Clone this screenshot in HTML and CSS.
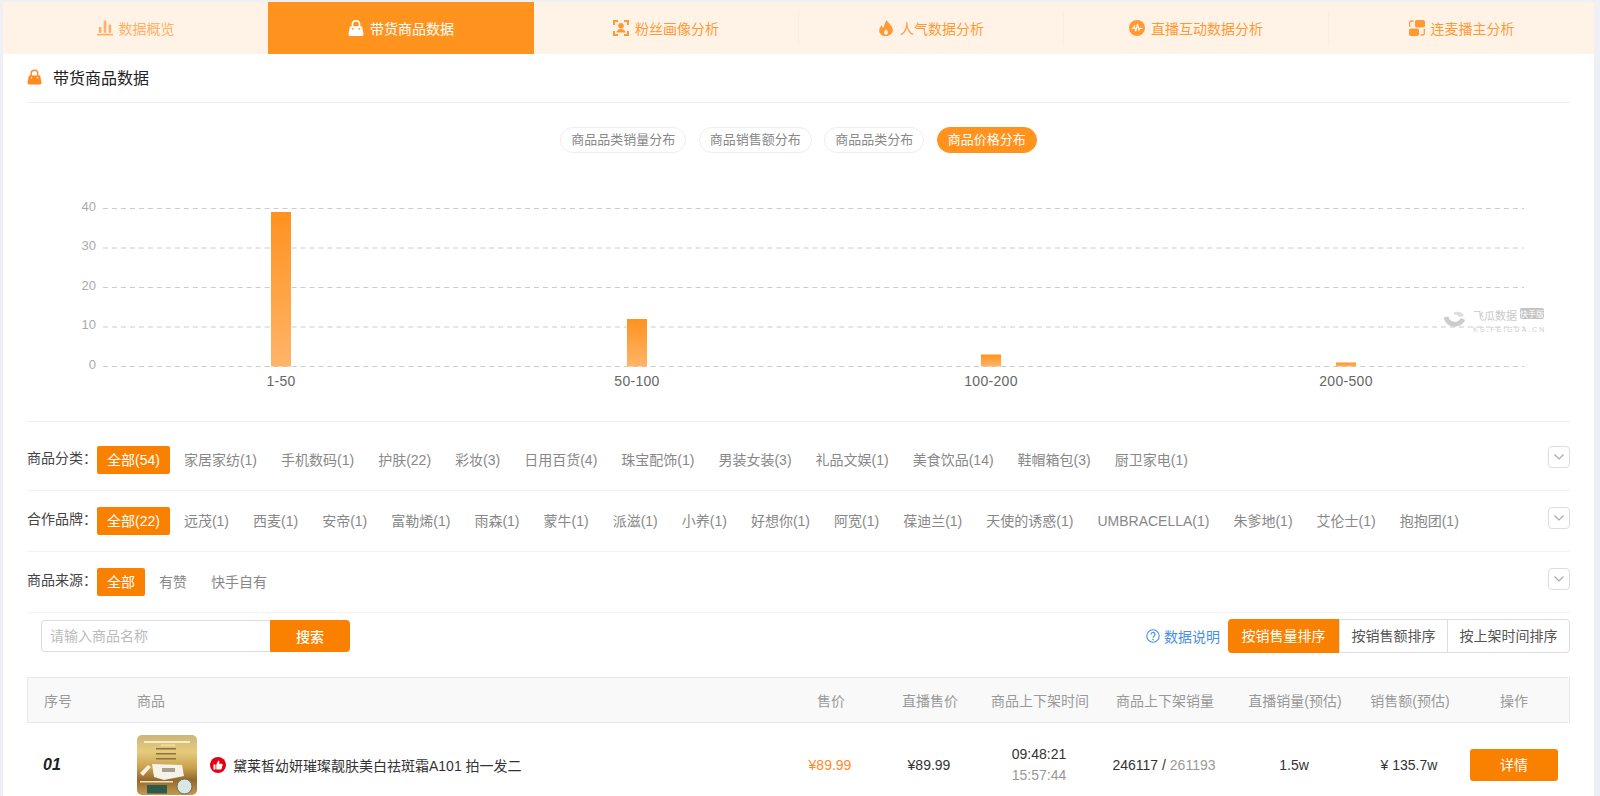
FILE: index.html
```html
<!DOCTYPE html>
<html lang="zh-CN">

<head>
    <meta charset="UTF-8">
    <title>带货商品数据</title>
    <link rel="stylesheet" href="styles.css">
</head>

<body>
    <div class="page">
        <div class="tabs">
            <a class="tab tab-first"><span class="tab-in">
                <svg class="tab-icon" viewBox="0 0 16 16"><path fill="currentColor" d="M0 13.800h16V15.500H0zM1.800 7h2.600v5.800H1.800zM6.700 .5h2.600v12.300H6.700zM11.600 4.500h2.600v8.300h-2.600z"/></svg>
                数据概览</span></a>
            <a class="tab active"><span class="tab-in">
                <svg class="tab-icon" viewBox="0 0 16 16"><path fill="none" stroke="currentColor" stroke-width="1.700" d="M4.500 8V4a3.500 3.200 0 0 1 7 0v4"/><path fill="currentColor" d="M2 6.300h12l1.500 7.800a1.700 1.700 0 0 1-1.700 1.900H2.200a1.700 1.700 0 0 1-1.700-1.900z"/><circle cx="4.800" cy="8.800" r=".9" fill="#ff931e"/><circle cx="11.200" cy="8.800" r=".9" fill="#ff931e"/></svg>
                带货商品数据</span></a>
            <a class="tab"><span class="tab-in divided">
                <svg class="tab-icon" viewBox="0 0 16 16"><path fill="none" stroke="currentColor" stroke-width="2" d="M5 1H1v4M11 1h4v4M5 15H1v-4M11 15h4v-4"/><circle cx="8" cy="5.800" r="2.800" fill="currentColor"/><path fill="currentColor" d="M3.500 12.500c.3-2.400 2.200-3.500 4.500-3.500s4.200 1.100 4.500 3.500z"/></svg>
                粉丝画像分析</span></a>
            <a class="tab"><span class="tab-in divided">
                <svg class="tab-icon" viewBox="0 0 16 16"><path fill="currentColor" d="M8.800 0c.5 2.700 6 5 6 10.200 0 3.400-2.900 5.800-6.800 5.800s-6.800-2.300-6.800-5.600c0-2.400 1.300-4 2.800-5.200.1 1.300.5 2.300 1.300 2.800C6.300 5 7 2 8.800 0zM8 9c-.3 1.300-2 2-2 3.800 0 1.100.9 1.900 2 1.900s2-.8 2-1.900C10 11 8.500 10.400 8 9z"/></svg>
                人气数据分析</span></a>
            <a class="tab"><span class="tab-in divided">
                <svg class="tab-icon" viewBox="0 0 16 16"><circle cx="8" cy="8" r="8" fill="currentColor"/><path fill="none" stroke="#fff3e8" stroke-width="1.300" d="M2.500 8.300h1.800l1.100-2 1.400 5 1.700-7.300 1.400 6 .9-1.700h2.700"/></svg>
                直播互动数据分析</span></a>
            <a class="tab"><span class="tab-in">
                <svg class="tab-icon" viewBox="0 0 16 16"><rect x="6" y="0" width="10" height="7.500" rx="1.800" fill="currentColor"/><rect x="0" y="8.500" width="10" height="7.500" rx="1.800" fill="currentColor"/><path fill="none" stroke="currentColor" stroke-width="1.300" d="M4.500 1H2.500A1.800 1.800 0 0 0 .7 2.800V7M11.500 15h2a1.800 1.800 0 0 0 1.800-1.800V9"/></svg>
                连麦播主分析</span></a>
        </div>

        <div class="panel">
            <div class="panel-title">
                <svg class="title-icon" viewBox="0 0 16 16"><path fill="none" stroke="#ff8a2b" stroke-width="1.500" d="M4.500 8V4a3.500 3.200 0 0 1 7 0v4"/><path fill="#ff8a1f" d="M2 6.300h12l1.500 7.800a1.700 1.700 0 0 1-1.700 1.900H2.200a1.700 1.700 0 0 1-1.700-1.900z"/><circle cx="4.800" cy="8.800" r=".8" fill="#fff"/><circle cx="11.200" cy="8.800" r=".8" fill="#fff"/></svg>
                带货商品数据
            </div>

            <div class="pills">
                <span class="pill">商品品类销量分布</span>
                <span class="pill">商品销售额分布</span>
                <span class="pill">商品品类分布</span>
                <span class="pill on">商品价格分布</span>
            </div>

            <div class="chart">
                <svg class="chart-svg" width="1543" height="245" viewBox="0 0 1543 245">
                    <defs>
                        <linearGradient id="barFill" x1="0" y1="0" x2="0" y2="1">
                            <stop offset="0" stop-color="#ff921f"/>
                            <stop offset="1" stop-color="#ffb468"/>
                        </linearGradient>
                    </defs>
                    <g class="grid">
                        <line x1="76" x2="1497" y1="32.500" y2="32.500"/>
                        <line x1="76" x2="1497" y1="72" y2="72"/>
                        <line x1="76" x2="1497" y1="111.500" y2="111.500"/>
                        <line x1="76" x2="1497" y1="151" y2="151"/>
                        <line x1="76" x2="1497" y1="190.500" y2="190.500"/>
                    </g>
                    <g class="y-labels">
                        <text x="69" y="32">40</text>
                        <text x="69" y="71">30</text>
                        <text x="69" y="111">20</text>
                        <text x="69" y="150">10</text>
                        <text x="69" y="190">0</text>
                    </g>
                    <!-- logo mark, sits under the bars -->
                    <g class="mark" transform="translate(24 1)">
                        <path class="mark-ring" d="M1395 140A9 9 0 0 0 1412 142"/>
                        <path class="mark-dot" d="M1403 135c4-1 9 0 10 4l-5 1c-1-2-3-3-5-2z"/>
                        <text class="mark-name" x="1422" y="143">飞瓜数据</text>
                        <rect class="mark-tag" x="1469" y="131" width="24" height="11" rx="2"/>
                        <text class="mark-tag-text" x="1481" y="140">快手版</text>
                        <text class="mark-url" x="1422" y="155">KS.FEIGUA.CN</text>
                    </g>
                    <g fill="url(#barFill)">
                        <rect x="244" y="36" width="20" height="154.500"/>
                        <rect x="600" y="143" width="20" height="47.500"/>
                        <rect x="954" y="178.500" width="20" height="12"/>
                        <rect x="1309" y="186.500" width="20" height="4"/>
                    </g>
                    <g class="x-labels">
                        <text x="254" y="210">1-50</text>
                        <text x="610" y="210">50-100</text>
                        <text x="964" y="210">100-200</text>
                        <text x="1319" y="210">200-500</text>
                    </g>
                </svg>
            </div>

            <div class="filter filter-first">
                <span class="filter-label">商品分类：</span>
                <div class="tags">
                    <a class="tag on">全部(54)</a>
                    <a class="tag">家居家纺(1)</a>
                    <a class="tag">手机数码(1)</a>
                    <a class="tag">护肤(22)</a>
                    <a class="tag">彩妆(3)</a>
                    <a class="tag">日用百货(4)</a>
                    <a class="tag">珠宝配饰(1)</a>
                    <a class="tag">男装女装(3)</a>
                    <a class="tag">礼品文娱(1)</a>
                    <a class="tag">美食饮品(14)</a>
                    <a class="tag">鞋帽箱包(3)</a>
                    <a class="tag">厨卫家电(1)</a>
                </div>
                <span class="expand"><svg viewBox="0 0 12 8" width="12" height="8"><path fill="none" stroke="#aaa" stroke-width="1.200" d="M1.500 1.500 6 6l4.500-4.500"/></svg></span>
            </div>
            <div class="filter">
                <span class="filter-label">合作品牌：</span>
                <div class="tags">
                    <a class="tag on">全部(22)</a>
                    <a class="tag">远茂(1)</a>
                    <a class="tag">西麦(1)</a>
                    <a class="tag">安帝(1)</a>
                    <a class="tag">富勒烯(1)</a>
                    <a class="tag">雨森(1)</a>
                    <a class="tag">蒙牛(1)</a>
                    <a class="tag">派滋(1)</a>
                    <a class="tag">小养(1)</a>
                    <a class="tag">好想你(1)</a>
                    <a class="tag">阿宽(1)</a>
                    <a class="tag">葆迪兰(1)</a>
                    <a class="tag">天使的诱惑(1)</a>
                    <a class="tag">UMBRACELLA(1)</a>
                    <a class="tag">朱爹地(1)</a>
                    <a class="tag">艾伦士(1)</a>
                    <a class="tag">抱抱团(1)</a>
                </div>
                <span class="expand"><svg viewBox="0 0 12 8" width="12" height="8"><path fill="none" stroke="#aaa" stroke-width="1.200" d="M1.500 1.500 6 6l4.500-4.500"/></svg></span>
            </div>
            <div class="filter">
                <span class="filter-label">商品来源：</span>
                <div class="tags">
                    <a class="tag on">全部</a>
                    <a class="tag">有赞</a>
                    <a class="tag">快手自有</a>
                </div>
                <span class="expand"><svg viewBox="0 0 12 8" width="12" height="8"><path fill="none" stroke="#aaa" stroke-width="1.200" d="M1.500 1.500 6 6l4.500-4.500"/></svg></span>
            </div>

            <div class="toolbar">
                <div class="search">
                    <input class="search-input" type="text" placeholder="请输入商品名称">
                    <button class="search-btn">搜索</button>
                </div>
                <div class="sorts">
                    <a class="help">
                        <svg viewBox="0 0 14 14" width="14" height="14"><circle cx="7" cy="7" r="6.200" fill="none" stroke="#4a8ee6" stroke-width="1.100"/><path fill="none" stroke="#4a8ee6" stroke-width="1.200" d="M5 5.500a2 2 0 1 1 3 1.700c-.7.400-1 .8-1 1.600"/><circle cx="7" cy="10.500" r=".8" fill="#4a8ee6"/></svg>
                        数据说明
                    </a>
                    <div class="sort-group">
                        <a class="sort on">按销售量排序</a>
                        <a class="sort">按销售额排序</a>
                        <a class="sort">按上架时间排序</a>
                    </div>
                </div>
            </div>

            <div class="goods-table">
                <div class="goods-row goods-head">
                    <div class="col-no">序号</div>
                    <div class="col-goods">商品</div>
                    <div class="mid">售价</div>
                    <div class="mid">直播售价</div>
                    <div class="mid">商品上下架时间</div>
                    <div class="mid">商品上下架销量</div>
                    <div class="mid">直播销量(预估)</div>
                    <div class="mid">销售额(预估)</div>
                    <div class="mid">操作</div>
                </div>
                <div class="goods-row goods-item">
                    <div class="col-no rank">01</div>
                    <div class="goods-info">
                        <svg class="goods-pic" viewBox="0 0 60 60">
                            <defs>
                                <linearGradient id="picFill" x1="0" y1="0" x2="0" y2="1">
                                    <stop offset="0" stop-color="#cdb57a"/>
                                    <stop offset=".28" stop-color="#e6cb7c"/>
                                    <stop offset=".55" stop-color="#c89f4c"/>
                                    <stop offset=".75" stop-color="#94682b"/>
                                    <stop offset="1" stop-color="#c49a52"/>
                                </linearGradient>
                                <filter id="picSoft"><feGaussianBlur stdDeviation=".6"/></filter>
                            </defs>
                            <rect width="60" height="60" fill="url(#picFill)"/>
                            <g filter="url(#picSoft)">
                                <path fill="#f7ecc4" d="M7 6h46v2H7z"/>
                                <path fill="#f2e2a8" d="M24 9.500h14v1.500H24z"/>
                                <path fill="#8a7540" d="M19 13h20v1.500H19zM19 18h20v1.500H19zM19 23h20v1.500H19z"/>
                                <path fill="#f5f0e2" d="M3 38l8-8 3 2-8 9z"/>
                                <path fill="#f6f2ea" d="M15 29l30 1 2 11-20 4-10-3z"/>
                                <path fill="#a5a08e" d="M25 33h13v4H25z"/>
                                <path fill="#f1e3c3" d="M3 46h33v1.500H3z"/>
                                <rect x="10" y="50" width="20" height="8.500" fill="#2f5a48"/>
                                <circle cx="47.500" cy="51.500" r="7.500" fill="#d7e7e1" stroke="#6f6a55"/>
                            </g>
                        </svg>
                        <svg class="thumb" viewBox="0 0 16 16"><circle cx="8" cy="8" r="8" fill="#e60012"/><path fill="#fff" d="M3.500 7.500h2v5h-2zM6.300 7.500 8.200 3.800c.9-.2 1.400.5 1.200 1.400l-.3 1.500h2.600c.7 0 1.100.6.900 1.300l-.9 3.600c-.1.500-.5.900-1.100.9H6.300z"/></svg>
                        <span class="goods-name">黛莱皙幼妍璀璨靓肤美白祛斑霜A101 拍一发二</span>
                    </div>
                    <div class="mid price">¥89.99</div>
                    <div class="mid">¥89.99</div>
                    <div class="mid times">09:48:21<br><span class="gray">15:57:44</span></div>
                    <div class="mid">246117 / <span class="gray">261193</span></div>
                    <div class="mid">1.5w</div>
                    <div class="mid">¥ 135.7w</div>
                    <div class="mid"><a class="detail-btn">详情</a></div>
                </div>
            </div>
        </div>
    </div>
</body>

</html>
```

FILE: styles.css
```css
html,
body {
    height: 796px;
    overflow: hidden;
}

body {
    margin: 0;
    background: #eef0f6;
    font-family: "Liberation Sans", "Noto Sans CJK SC", sans-serif;
    font-size: 14px;
    color: #333;
}

.page {
    margin: 2px 6px 0 3px;
    background: #fff;
    height: 794px;
    overflow: hidden;
}

/* top tabs */
.tabs {
    display: flex;
    height: 52px;
    background: #fff3e8;
}

.tab {
    flex: 1;
    display: flex;
    align-items: center;
    color: #ff9a33;
}

.tab-first {
    color: #ffb066;
}

.tab-in {
    flex: 1;
    height: 32px;
    display: flex;
    align-items: center;
    justify-content: center;
    gap: 6px;
}

.divided {
    border-right: 1px solid #fdeadb;
}

.tab.active {
    flex: 0 0 266px;
    background: #ff931e;
    color: #fff;
}

.tab-icon {
    width: 16px;
    height: 16px;
}

.panel {
    padding: 0 24px;
}

.panel-title {
    display: flex;
    align-items: center;
    gap: 11px;
    height: 46px;
    padding-bottom: 2px;
    border-bottom: 1px solid #eee;
    font-size: 16px;
    color: #222;
}

.title-icon {
    width: 15px;
    height: 16px;
}

/* chart switch */
.pills {
    display: flex;
    justify-content: center;
    gap: 12.500px;
    margin-top: 24px;
}

.pill {
    height: 26px;
    line-height: 24px;
    box-sizing: border-box;
    padding: 0 10px;
    border: 1px solid #eee;
    border-radius: 13px;
    font-size: 13px;
    color: #888;
}

.pill.on {
    background: #ff931e;
    border-color: #ff931e;
    color: #fff;
}

.chart {
    margin-top: 23px;
    height: 245px;
    border-bottom: 1px solid #eee;
}

.chart-svg {
    display: block;
}

.grid line {
    stroke: #ccc;
    stroke-dasharray: 5 3.980;
}

.y-labels text {
    font-size: 13px;
    fill: #aaa;
    text-anchor: end;
    dominant-baseline: middle;
}

.x-labels text {
    font-size: 14px;
    letter-spacing: .3px;
    fill: #666;
    text-anchor: middle;
}

.mark-ring {
    fill: none;
    stroke: #ccc;
    stroke-width: 5;
}

.mark-dot {
    fill: #ddd;
}

.mark-name {
    font-size: 11px;
    fill: #c8c8c8;
}

.mark-tag {
    fill: #c4c4c4;
}

.mark-tag-text {
    font-size: 8px;
    fill: #fff;
    text-anchor: middle;
}

.mark-url {
    font-size: 7px;
    letter-spacing: 2px;
    fill: #ccc;
}

/* filters */
.filter {
    display: flex;
    align-items: flex-start;
    padding: 16px 0;
    border-bottom: 1px solid #f2f2f2;
}

.filter-first {
    padding-top: 24px;
}

.filter-label {
    width: 70px;
    flex: none;
    line-height: 24px;
    color: #444;
}

.tags {
    flex: 1;
    display: flex;
    gap: 4px;
}

.tag {
    height: 28px;
    line-height: 28px;
    padding: 0 10px;
    border-radius: 2px;
    color: #888;
    white-space: nowrap;
}

.tag.on {
    background: #fa8000;
    color: #fff;
}

.expand {
    flex: none;
    width: 22px;
    height: 22px;
    box-sizing: border-box;
    border: 1px solid #ddd;
    border-radius: 4px;
    display: flex;
    align-items: center;
    justify-content: center;
}

/* search and sort */
.toolbar {
    display: flex;
    justify-content: space-between;
    align-items: flex-start;
    padding-top: 6px;
    margin-bottom: 24px;
}

.search {
    display: flex;
    margin: 1px 0 0 14px;
}

.search-input {
    width: 229px;
    height: 32px;
    box-sizing: border-box;
    padding: 0 8px;
    border: 1px solid #ddd;
    border-right: 0;
    border-radius: 4px 0 0 4px;
    outline: none;
    font: inherit;
}

.search-input::placeholder {
    color: #bbb;
}

.search-btn {
    width: 80px;
    height: 32px;
    border: 0;
    border-radius: 0 4px 4px 0;
    background: #fa8000;
    color: #fff;
    font: inherit;
    font-weight: 500;
}

.sorts {
    display: flex;
    align-items: center;
    gap: 8px;
}

.help {
    display: flex;
    align-items: center;
    gap: 4px;
    color: #4a8ee6;
}

.sort-group {
    display: flex;
    height: 34px;
    box-sizing: border-box;
    border: 1px solid #ddd;
    border-radius: 4px;
}

.sort {
    line-height: 32px;
    padding: 0 11.500px;
    border-left: 1px solid #ddd;
    color: #555;
}

.sort:first-child {
    border-left: 0;
}

.sort.on {
    margin: -1px 0 -1px -1px;
    padding: 0 13.500px;
    line-height: 34px;
    background: #fa8000;
    border-radius: 4px 0 0 4px;
    color: #fff;
}

/* goods table */
.goods-row {
    display: grid;
    grid-template-columns: 110px 1fr 100px 98px 122px 128px 132px 98px 112px;
    align-items: center;
}

.goods-head {
    grid-template-columns: 110px 1fr 100px 98px 122px 128px 132px 98px 110px;
    height: 46px;
    box-sizing: border-box;
    background: #f9f9f9;
    border: 1px solid #e8e8e8;
    color: #999;
}

.col-goods {
    margin-left: -1px;
}

.goods-item {
    padding: 12px 0;
    color: #333;
}

.col-no {
    padding-left: 16px;
}

.mid {
    text-align: center;
}

.rank {
    font-size: 16px;
    font-weight: bold;
    font-style: italic;
    color: #222;
}

.goods-info {
    display: flex;
    align-items: center;
}

.goods-pic {
    width: 60px;
    height: 60px;
    border-radius: 5px;
    flex: none;
}

.thumb {
    width: 16px;
    height: 16px;
    margin: 0 7px 0 13px;
    flex: none;
}

.price {
    color: #ff8a2b;
}

.times {
    line-height: 21px;
}

.gray {
    color: #999;
}

.detail-btn {
    display: block;
    width: 88px;
    height: 32px;
    line-height: 32px;
    margin: 0 0 0 12px;
    border-radius: 3px;
    background: #fa8000;
    color: #fff;
}
```
